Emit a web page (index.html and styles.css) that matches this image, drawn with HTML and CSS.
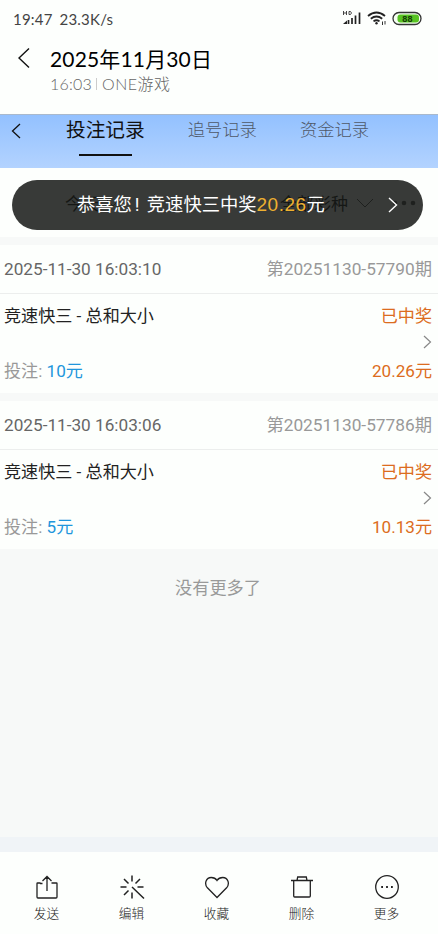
FILE: index.html
```html
<!DOCTYPE html>
<html lang="zh-CN">
<head>
    <meta charset="UTF-8">
    <meta name="viewport" content="width=device-width, initial-scale=1.0">
    <title>投注记录</title>
    <link rel="stylesheet" href="styles.css">
</head>
<body>
    <div class="status-bar">
        <span class="clock">19:47</span>
        <span class="speed">23.3K/s</span>
        <svg class="status-icons" width="82" height="18" viewBox="0 0 82 18">
            <path d="M1.500 1v4M4.500 1v4M1.500 3h3M7 1.500v3h1.500q2-1.500 0-3z" fill="none" stroke="#333" stroke-width=".9"/>
            <path d="M6.500 14V10M10 14V8M13.500 14V5.500M17.500 14V2.500" stroke="#222" stroke-width="1.700"/>
            <path d="M1 14l4-3.500v3.500z" fill="#222"/>
            <path d="M26 6q8.500-7 17 0M28.800 8.800q5.700-4.500 11.400 0M31.500 11.400q3-2.300 6 0" fill="none" stroke="#222" stroke-width="1.800"/>
            <circle cx="34.500" cy="13.200" r="1.200" fill="#222"/>
            <path d="M40.500 11.500v3.500M43 11v3.500" stroke="#333"/>
            <rect x="51" y="2.500" width="28" height="12" rx="6" fill="#f4fff0" stroke="#333" stroke-width="1.300"/>
            <rect x="55.500" y="4.500" width="21.500" height="8" rx="3" fill="#58c322"/>
            <text x="65.500" y="12" text-anchor="middle" class="battery-text">88</text>
        </svg>
    </div>

    <header class="title-bar">
        <svg class="back" width="13" height="22" viewBox="0 0 13 22"><path d="M11 1.500L1 11l10 9.500" fill="none" stroke="#111" stroke-width="1.400"/></svg>
        <div>
            <h1 class="date">2025年11月30日</h1>
            <p class="sub"><span>16:03</span><i class="sep"></i><span>ONE游戏</span></p>
        </div>
    </header>

    <nav class="tabs">
        <svg class="tab-back" width="10" height="16" viewBox="0 0 10 16"><path d="M9 1L1.500 8 9 15" fill="none" stroke="#111" stroke-width="1.300"/></svg>
        <a class="tab active">投注记录</a>
        <a class="tab second">追号记录</a>
        <a class="tab third">资金记录</a>
    </nav>

    <div class="filter">
        <span class="filter-day">今天</span>
        <svg class="day-arrow" width="16" height="10" viewBox="0 0 16 10"><path d="M1 1l7 7 7-7" fill="none" stroke="#777"/></svg>
        <span class="filter-type">全部彩种</span>
        <svg class="type-arrow" width="18" height="10" viewBox="0 0 18 10"><path d="M1 1l8 8 8-8" fill="none" stroke="#666"/></svg>
        <svg class="dots" width="24" height="6" viewBox="0 0 24 6" fill="#666"><circle cx="3" cy="3" r="2.300"/><circle cx="12" cy="3" r="2.300"/><circle cx="21" cy="3" r="2.300"/></svg>
        <div class="toast">
            <span class="toast-text">恭喜您<i>!</i>竞速快三中奖<b>20.26</b>元</span>
            <svg class="toast-arrow" width="10" height="16" viewBox="0 0 10 16"><path d="M1 1l7.500 7L1 15" fill="none" stroke="#fff" stroke-width="1.400"/></svg>
        </div>
    </div>

    <main class="records">
        <section class="record">
            <div class="record-head">
                <span class="time">2025-11-30 16:03:10</span>
                <span class="issue">第20251130-57790期</span>
            </div>
            <div class="record-body">
                <div class="row"><span class="game">竞速快三 - 总和大小</span><span class="win">已中奖</span></div>
                <svg class="more" width="9" height="14" viewBox="0 0 9 14"><path d="M1 1l6.500 6L1 13" fill="none" stroke="#888" stroke-width="1.200"/></svg>
                <div class="row"><span class="bet">投注: <b>10元</b></span><span class="win amount">20.26元</span></div>
            </div>
        </section>
        <section class="record">
            <div class="record-head">
                <span class="time">2025-11-30 16:03:06</span>
                <span class="issue">第20251130-57786期</span>
            </div>
            <div class="record-body">
                <div class="row"><span class="game">竞速快三 - 总和大小</span><span class="win">已中奖</span></div>
                <svg class="more" width="9" height="14" viewBox="0 0 9 14"><path d="M1 1l6.500 6L1 13" fill="none" stroke="#888" stroke-width="1.200"/></svg>
                <div class="row"><span class="bet">投注: <b>5元</b></span><span class="win amount">10.13元</span></div>
            </div>
        </section>
        <p class="no-more">没有更多了</p>
    </main>

    <footer class="toolbar">
        <a class="tool">
            <svg width="26" height="26" viewBox="0 0 26 26"><path d="M8.500 9.500H6.500L6 9H3.500q-.500 0-.500.500v13.500q0 1 1 1h18q1 0 1-1V9.500q0-.500-.500-.500H17.500M13 17V2.500M8.500 7L13 2.500 17.500 7"/></svg>
            <span>发送</span>
        </a>
        <a class="tool">
            <svg width="26" height="26" viewBox="0 0 26 26"><path d="M13 1.500v6M13 18.500v6M1.500 13h6M18.500 13h6M5 5l4.500 4.500M21 5l-4.500 4.500M5 21l4.500-4.500M13 13l12 11.500" stroke-width="1.500"/></svg>
            <span>编辑</span>
        </a>
        <a class="tool">
            <svg width="26" height="26" viewBox="0 0 26 26"><path d="M13 23.500L3.400 13.800C-.200 9.500 2.300 3.500 7.200 3.500c2.600 0 4.400 .8 5.800 3 1.400-2.200 3.200-3 5.800-3 4.900 0 7.400 6 3.800 10.300z"/></svg>
            <span>收藏</span>
        </a>
        <a class="tool">
            <svg width="26" height="26" viewBox="0 0 26 26"><path d="M2 6.500h22M4.700 6.500v15.500q0 1 1 1h14.600q1 0 1-1V6.500M8 6.500l.7-3.500h8.600l.7 3.500"/></svg>
            <span>删除</span>
        </a>
        <a class="tool">
            <svg width="26" height="26" viewBox="0 0 26 26"><circle cx="13" cy="13" r="11.300"/><path d="M7.200 13H9M12.100 13h1.800M17 13h1.800" stroke-width="1.800"/></svg>
            <span>更多</span>
        </a>
    </footer>
</body>
</html>
```
FILE: styles.css
```css
* {
    box-sizing: border-box;
}
body {
    margin: 0;
    height: 934px;
    display: flex;
    flex-direction: column;
    overflow: hidden;
    background-color: #fdfffd;
    font-family: Roboto, "Noto Sans CJK SC", sans-serif;
}
h1, p {
    margin: 0;
    font-weight: normal;
}
b {
    font-weight: normal;
}

/* phone status bar */
.status-bar {
    display: flex;
    align-items: center;
    height: 37px;
    padding: 0 14px 0 13px;
    font-family: Lato, sans-serif;
    font-size: 15px;
    letter-spacing: 0.2px;
    color: #444;
}
.speed {
    margin-left: 7px;
}
.status-icons {
    margin-left: auto;
}
.battery-text {
    font: bold 9px "Liberation Sans", sans-serif;
    fill: #143a08;
}

/* photo title */
.title-bar {
    display: flex;
    height: 77px;
    padding: 10px 0 0 18px;
    gap: 19px;
    font-family: Lato, "Noto Sans CJK SC", sans-serif;
}
.date {
    font-size: 21px;
    line-height: 23px;
    letter-spacing: 0.15px;
    color: #000;
    white-space: nowrap;
}
.sub {
    display: flex;
    align-items: center;
    font-size: 16px;
    line-height: 27px;
    letter-spacing: 0.2px;
    color: #666;
    font-weight: 300;
}
.sub span:last-child {
    letter-spacing: 0.5px;
}
.sep {
    width: 1px;
    height: 12px;
    margin: 0 5px 0 4px;
    background-color: #ccc;
}

/* tabs */
.tabs {
    display: flex;
    height: 54px;
    padding-left: 11px;
    background: linear-gradient(#93c1ff, #b3d3ff);
    border-top: 1px solid #a9b9cc;
}
.tab-back {
    margin-top: 8px;
}
.tab {
    height: 42px;
    font-size: 17.300px;
    line-height: 31px;
    font-weight: 300;
    color: #4f5868;
    white-space: nowrap;
}
.active {
    display: flex;
    flex-direction: column;
    align-items: center;
    margin-left: 45px;
    font-size: 19.700px;
    font-weight: normal;
    color: #111;
}
.active::after {
    content: "";
    width: 53px;
    height: 2px;
    margin-top: 8px;
    background-color: #111;
}
.second {
    margin-left: 43px;
}
.third {
    margin-left: 43px;
}

/* filter line with the toast over it */
.filter {
    position: relative;
    display: flex;
    align-items: center;
    height: 69px;
    padding-left: 65px;
    font-size: 17px;
    color: #333;
}
.day-arrow {
    margin-left: 6px;
}
.filter-type {
    margin-left: 159px;
}
.type-arrow {
    margin-left: 8px;
}
.dots {
    margin-left: 18px;
}
.toast {
    position: absolute;
    left: 12px;
    top: 12px;
    width: 411px;
    height: 50px;
    display: flex;
    align-items: center;
    padding: 0 25px 0 65px;
    border-radius: 25px;
    background-color: rgba(16, 18, 16, 0.830);
    color: #fff;
    font-size: 18.300px;
    line-height: 26px;
}
.toast-text i {
    display: inline-block;
    width: 15px;
    padding-left: 3px;
    font-style: normal;
}
.toast-text b {
    font-family: "Liberation Sans", sans-serif;
    font-size: 19px;
    letter-spacing: 0.5px;
    color: #eeb030;
}
.toast-arrow {
    margin-left: auto;
}

/* bet records */
.records {
    flex: 1;
    padding-top: 8px;
    background-color: #f7f9f8;
    border-bottom: 15px solid #f0f4f7;
}
.record {
    height: 148px;
    margin-bottom: 8px;
    background-color: #fdfffd;
}
.record-head,
.row {
    display: flex;
    justify-content: space-between;
    align-items: center;
    padding: 0 6px 0 4px;
    white-space: nowrap;
}
.record-head {
    height: 49px;
    padding-bottom: 1px;
    border-bottom: 1px solid #eceeed;
    font-size: 17.200px;
}
.record-head span {
    line-height: 24px;
}
.time {
    padding-top: 1px;
    color: #666;
}
.issue {
    font-size: 17.300px;
    color: #999;
}
.bet {
    color: #999;
}
.record-body {
    display: flex;
    flex-direction: column;
    padding-top: 7px;
    font-size: 17.100px;
}
.row {
    height: 26px;
}
.game {
    color: #222;
}
.win {
    color: #dc6c20;
}
.bet b {
    color: #2196dc;
}
.more {
    align-self: flex-end;
    margin: 8px 6px 7px 0;
}
.no-more {
    padding-top: 19px;
    text-align: center;
    font-size: 17.200px;
    line-height: 24px;
    color: #999;
    margin-right: 2px;
}

/* bottom toolbar */
.toolbar {
    display: grid;
    grid-template-columns: repeat(5, 85px);
    height: 82px;
    padding: 22px 0 0 4px;
    background-color: #fdfffd;
}
.tool {
    display: flex;
    flex-direction: column;
    align-items: center;
    font-size: 12.700px;
    line-height: 18px;
    gap: 5px;
    color: #222;
    font-weight: 300;
}
.tool svg {
    fill: none;
    stroke: #222;
    stroke-width: 1.3;
}
```
